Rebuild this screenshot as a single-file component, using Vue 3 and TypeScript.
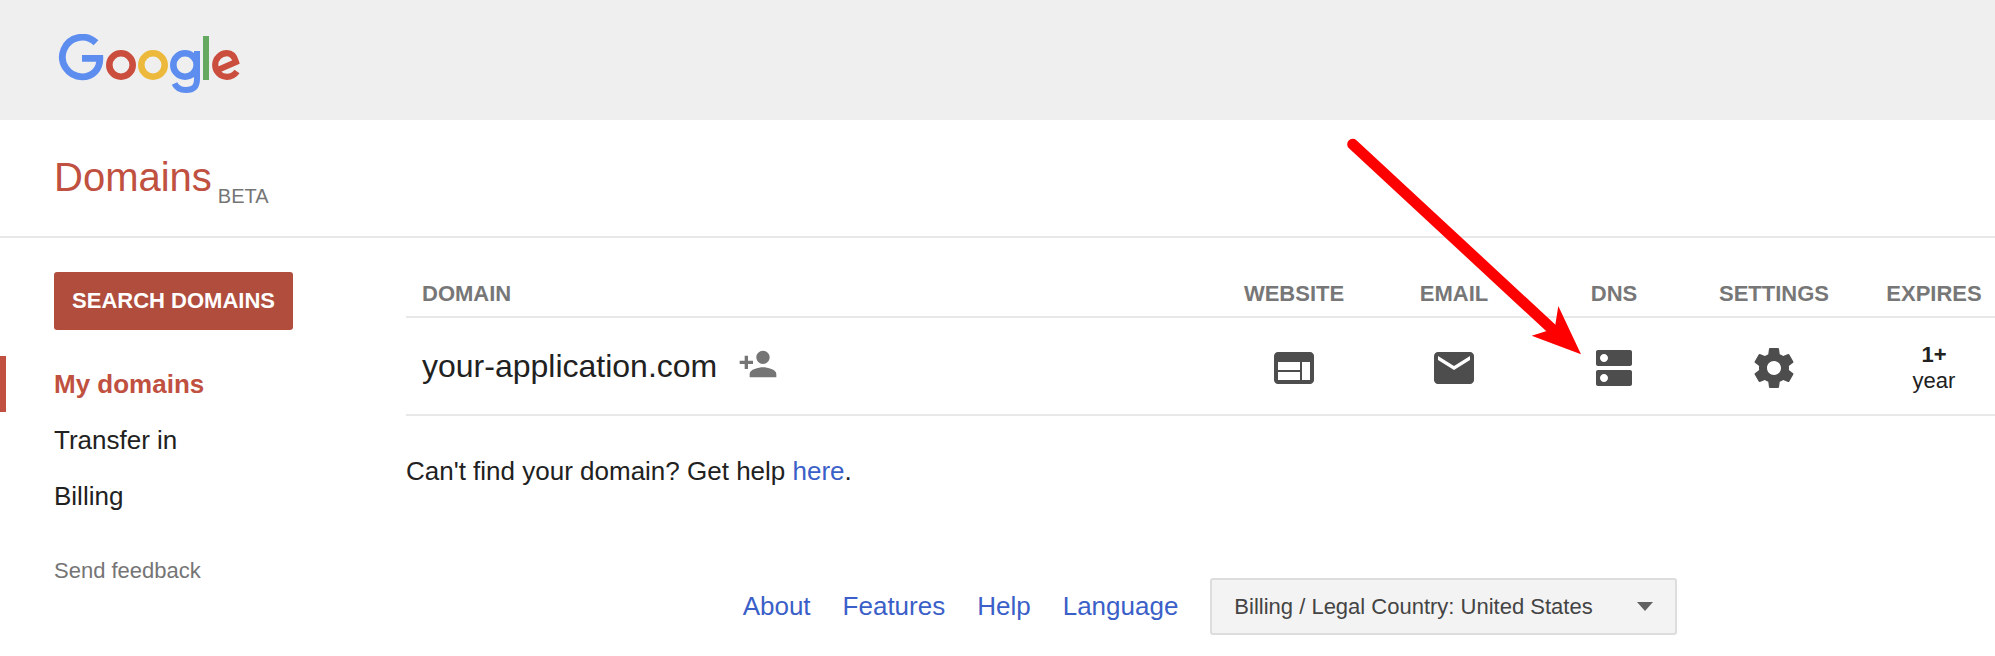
<script setup lang="ts">
interface Column {
  label: string
  icon?: string
}

const navItems = ['My domains', 'Transfer in', 'Billing']
const footerLinks = ['About', 'Features', 'Help', 'Language']

const personAdd =
  'M15 12c2.21 0 4-1.79 4-4s-1.79-4-4-4-4 1.79-4 4 1.79 4 4 4zm-9-2V7H4v3H1v2h3v3h2v-3h3v-2H6zm9 4c-2.67 0-8 1.34-8 4v2h16v-2c0-2.66-5.33-4-8-4z'

const columns: Column[] = [
  {
    label: 'WEBSITE',
    icon: 'M20 4H4c-1.1 0-1.99.9-1.99 2L2 18c0 1.1.9 2 2 2h16c1.1 0 2-.9 2-2V6c0-1.1-.9-2-2-2zm-5 14H4v-4h11v4zm0-5H4V9h11v4zm5 5h-4V9h4v9z'
  },
  {
    label: 'EMAIL',
    icon: 'M20 4H4c-1.1 0-1.99.9-1.99 2L2 18c0 1.1.9 2 2 2h16c1.1 0 2-.9 2-2V6c0-1.1-.9-2-2-2zm0 4l-8 5-8-5V6l8 5 8-5v2z'
  },
  {
    label: 'DNS',
    icon: 'M20 13H4c-.55 0-1 .45-1 1v6c0 .55.45 1 1 1h16c.55 0 1-.45 1-1v-6c0-.55-.45-1-1-1zM7 19c-1.1 0-2-.9-2-2s.9-2 2-2 2 .9 2 2-.9 2-2 2zM20 3H4c-.55 0-1 .45-1 1v6c0 .55.45 1 1 1h16c.55 0 1-.45 1-1V4c0-.55-.45-1-1-1zM7 9c-1.1 0-2-.9-2-2s.9-2 2-2 2 .9 2 2-.9 2-2 2z'
  },
  {
    label: 'SETTINGS',
    icon: 'M19.43 12.98c.04-.32.07-.64.07-.98s-.03-.66-.07-.98l2.11-1.65c.19-.15.24-.42.12-.64l-2-3.46c-.12-.22-.39-.3-.61-.22l-2.49 1c-.52-.4-1.08-.73-1.69-.98l-.38-2.65C14.46 2.18 14.25 2 14 2h-4c-.25 0-.46.18-.49.42l-.38 2.65c-.61.25-1.17.59-1.69.98l-2.49-1c-.23-.09-.49 0-.61.22l-2 3.46c-.13.22-.07.49.12.64l2.11 1.65c-.04.32-.07.65-.07.98s.03.66.07.98l-2.11 1.65c-.19.15-.24.42-.12.64l2 3.46c.12.22.39.3.61.22l2.49-1c.52.4 1.08.73 1.69.98l.38 2.65c.03.24.24.42.49.42h4c.25 0 .46-.18.49-.42l.38-2.65c.61-.25 1.17-.59 1.69-.98l2.49 1c.23.09.49 0 .61-.22l2-3.46c.12-.22.07-.49-.12-.64l-2.11-1.65zM12 15.5c-1.93 0-3.5-1.57-3.5-3.5s1.57-3.5 3.5-3.5 3.5 1.57 3.5 3.5-1.57 3.5-3.5 3.5z'
  },
  { label: 'EXPIRES' }
]
</script>

<template>
  <div class="page">
    <header class="topbar">
      <svg class="logo" width="182" height="60" viewBox="58 34 182 60" fill="none">
        <path
          d="M96 42.8A19.8 19.8 0 1 0 82 76.8C93 76.8 100 69 99.8 58.4H82"
          stroke="#5e8df0"
          stroke-width="6.8"
        />
        <circle cx="121" cy="65" r="11.7" stroke="#cb4d3e" stroke-width="6.6" />
        <circle cx="153" cy="65" r="11.7" stroke="#ecb93c" stroke-width="6.6" />
        <circle cx="185" cy="65" r="11.7" stroke="#5e8df0" stroke-width="6.6" />
        <path
          d="M197 51V79C197 88 192 90 186 90C181 90 176.5 88 174.5 83.5"
          stroke="#5e8df0"
          stroke-width="6"
        />
        <rect x="203" y="36" width="6" height="44" fill="#65a85f" />
        <path
          d="M216.5 70.5L236 62C234 55 231 53.2 227 53.2A11.8 11.8 0 0 0 227 76.8C231.5 76.8 234.5 75 237 71.5"
          stroke="#cb4d3e"
          stroke-width="6.2"
        />
      </svg>
    </header>

    <div class="title-row">
      <h1 class="title">Domains</h1>
      <span class="beta">BETA</span>
    </div>

    <div class="body">
      <aside class="sidebar">
        <button class="search-btn">SEARCH DOMAINS</button>
        <nav class="nav">
          <a
            v-for="(item, i) in navItems"
            :key="item"
            class="nav-item"
            :class="{ active: i === 0 }"
          >{{ item }}</a>
        </nav>
        <a class="feedback">Send feedback</a>
      </aside>

      <main class="content">
        <div class="table-row table-head">
          <div class="domain-cell">DOMAIN</div>
          <div v-for="col in columns" :key="col.label" class="cell">{{ col.label }}</div>
        </div>

        <div class="table-row table-body">
          <div class="domain-cell">
            <span class="domain-name">your-application.com</span>
            <svg class="person-icon" width="40" height="40" viewBox="0 0 24 24">
              <path :d="personAdd" fill="#757575" />
            </svg>
          </div>
          <div v-for="col in columns" :key="col.label" class="cell cell-low">
            <svg v-if="col.icon" width="48" height="48" viewBox="0 0 24 24">
              <path :d="col.icon" fill="#4d4d4d" />
            </svg>
            <div v-else class="expires">
              <strong>1+</strong>
              <span>year</span>
            </div>
          </div>
        </div>

        <p class="help">Can't find your domain? Get help <a class="link">here</a>.</p>

        <footer class="footer">
          <nav class="footer-links">
            <a v-for="link in footerLinks" :key="link" class="link footer-link">{{ link }}</a>
          </nav>
          <div class="country">
            <span>Billing / Legal Country: United States</span>
            <i class="caret"></i>
          </div>
        </footer>
      </main>
    </div>

    <svg class="arrow" width="1995" height="656" viewBox="0 0 1995 656">
      <path d="M1352.7 144.3L1552 329" stroke="#ff0000" stroke-width="11" stroke-linecap="round" />
      <path d="M1581 354.3L1558.3 306L1555 326.7L1546.7 331L1531.7 335.7Z" fill="#ff0000" />
    </svg>
  </div>
</template>

<style>
html,
body {
  margin: 0;
  overflow: hidden;
  background: #fff;
}
</style>

<style scoped>
.page {
  position: relative;
  width: 1995px;
  height: 656px;
  overflow: hidden;
  font-family: 'Liberation Sans', Arial, sans-serif;
  color: #212121;
}

.topbar {
  display: flex;
  height: 120px;
  padding: 34px 0 0 58px;
  box-sizing: border-box;
  background: #efefef;
}

.logo {
  display: block;
}

.title-row {
  display: flex;
  align-items: flex-end;
  height: 118px;
  padding: 0 0 35px 54px;
  box-sizing: border-box;
  border-bottom: 2px solid #e8e8e8;
}

.title {
  margin: 0;
  font-size: 40px;
  font-weight: 400;
  line-height: 48px;
  color: #c0503f;
}

.beta {
  margin: 0 0 -7px 6px;
  font-size: 20px;
  line-height: 24px;
  color: #757575;
}

.body {
  display: flex;
}

.sidebar {
  display: flex;
  flex: none;
  flex-direction: column;
  align-items: flex-start;
  width: 406px;
  padding-top: 34px;
  box-sizing: border-box;
}

.search-btn {
  width: 239px;
  height: 58px;
  margin-left: 54px;
  padding: 0;
  border: 0;
  border-radius: 3px;
  background: #b04d3d;
  color: #fff;
  font-family: inherit;
  font-size: 22px;
  font-weight: 700;
}

.nav {
  display: flex;
  flex-direction: column;
  margin-top: 26px;
}

.nav-item {
  padding-left: 48px;
  border-left: 6px solid transparent;
  font-size: 26px;
  line-height: 56px;
}

.nav-item.active {
  border-left-color: #c0503f;
  color: #c0503f;
  font-weight: 700;
}

.feedback {
  margin: 32px 0 0 54px;
  font-size: 22px;
  line-height: 30px;
  color: #757575;
}

.content {
  flex: none;
  width: 1608px;
}

.table-row {
  display: grid;
  grid-template-columns: 808px repeat(5, 160px);
  align-items: center;
  border-bottom: 2px solid #e8e8e8;
}

.table-head {
  height: 46px;
  margin-top: 34px;
  box-sizing: border-box;
  font-size: 22px;
  font-weight: 700;
  color: #777;
}

.table-body {
  height: 98px;
  box-sizing: border-box;
}

.domain-cell {
  display: flex;
  align-items: center;
  padding-left: 16px;
}

.domain-name {
  font-size: 32px;
}

.person-icon {
  margin: -4px 0 0 21px;
}

.cell {
  display: flex;
  justify-content: center;
  text-align: center;
}

.cell-low {
  padding-top: 4px;
}

.expires {
  display: flex;
  flex-direction: column;
  font-size: 22px;
  line-height: 26px;
}

.help {
  margin: 38px 0 0;
  font-size: 26px;
  line-height: 34px;
}

.link {
  color: #3b5fc8;
}

.footer {
  display: flex;
  align-items: center;
  justify-content: center;
  gap: 32px;
  margin-top: 90px;
}

.footer-links {
  display: flex;
  gap: 32px;
}

.footer-link {
  font-size: 26px;
}

.country {
  display: flex;
  align-items: center;
  justify-content: space-between;
  width: 467px;
  height: 57px;
  padding: 0 22px;
  box-sizing: border-box;
  border: 2px solid #ddd;
  border-radius: 3px;
  background: #f3f3f3;
  color: #444;
  font-size: 22px;
}

.caret {
  width: 0;
  height: 0;
  border-top: 9px solid #616161;
  border-right: 8px solid transparent;
  border-left: 8px solid transparent;
}

.arrow {
  position: absolute;
  top: 0;
  left: 0;
  pointer-events: none;
}
</style>
